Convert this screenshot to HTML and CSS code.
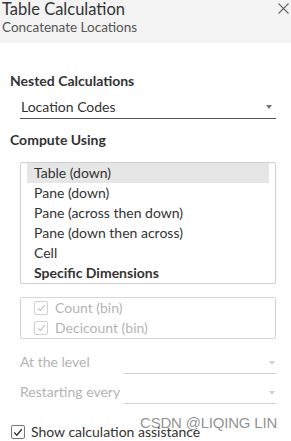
FILE: index.html
```html
<!DOCTYPE html>
<html>
<head>
<meta charset="utf-8">
<link rel="stylesheet" href="styles.css">
</head>
<body>
<div class="panel">
  <header class="head">
    <div class="titles">
      <div class="title">Table Calculation</div>
      <div class="sub">Concatenate Locations</div>
    </div>
    <svg class="close" width="11" height="11" viewBox="0 0 11 11"><path d="M0.5 0.5L10.5 10.5M10.5 0.5L0.5 10.5" stroke="#666" stroke-width="1.1" fill="none"/></svg>
  </header>
  <section class="content">
    <div class="label">Nested Calculations</div>
    <div class="select">
      <span>Location Codes</span>
      <span class="arrow"></span>
    </div>
    <div class="label label-compute">Compute Using</div>
    <ul class="list">
      <li class="item selected">Table (down)</li>
      <li class="item">Pane (down)</li>
      <li class="item">Pane (across then down)</li>
      <li class="item">Pane (down then across)</li>
      <li class="item">Cell</li>
      <li class="item strong">Specific Dimensions</li>
    </ul>
    <div class="dims">
      <div class="dim"><span class="cb cb-dis"><svg width="9" height="8" viewBox="0 0 9 8"><path d="M1 4.2L3.4 6.5L8 1" stroke="#c8c8c8" stroke-width="1.2" fill="none"/></svg></span>Count (bin)</div>
      <div class="dim"><span class="cb cb-dis"><svg width="9" height="8" viewBox="0 0 9 8"><path d="M1 4.2L3.4 6.5L8 1" stroke="#c8c8c8" stroke-width="1.2" fill="none"/></svg></span>Decicount (bin)</div>
    </div>
    <div class="lvl">
      <span class="lvl-label">At the level</span>
      <span class="field"><span class="arrow arrow-dis"></span></span>
    </div>
    <div class="lvl lvl-second">
      <span class="lvl-label">Restarting every</span>
      <span class="field"><span class="arrow arrow-dis"></span></span>
    </div>
    <div class="assist">
      <span class="cb cb-on"><svg width="10" height="9" viewBox="0 0 10 9"><path d="M1.2 4.6L3.8 7.2L8.8 1.2" stroke="#333" stroke-width="1.4" fill="none"/></svg></span>
      <span>Show calculation assistance</span>
    </div>
  </section>
  <div class="watermark">CSDN @LIQING LIN</div>
</div>
</body>
</html>
```
FILE: styles.css
```css
html, body {
  margin: 0;
  padding: 0;
  background: #fff;
}
body {
  font-family: Lato, "Open Sans", "Liberation Sans", sans-serif;
  color: #333;
  font-size: 14px;
}
.panel {
  position: relative;
  width: 291px;
  height: 441px;
  overflow: hidden;
}
.head {
  height: 43px;
  background: #f3f3f3;
  display: flex;
  justify-content: space-between;
  align-items: flex-start;
  padding-left: 2px;
  box-sizing: border-box;
}
.title {
  font-size: 16.5px;
  line-height: 18px;
  color: #333;
}
.sub {
  font-size: 13.5px;
  line-height: 16px;
  margin-top: 1px;
  color: #555;
}
.close {
  margin-top: 3px;
  margin-right: 2px;
}
.content {
  padding: 0;
}
.label {
  font-weight: bold;
  line-height: 20px;
  margin: 28px 0 0 10px;
  color: #333;
}
.label-compute {
  margin-top: 11px;
}
.select {
  margin: 6px 15px 0 20px;
  padding: 0 4px 1px 1px;
  line-height: 20px;
  border-bottom: 1px solid #555;
  display: flex;
  justify-content: space-between;
  align-items: center;
}
.arrow {
  width: 0;
  height: 0;
  border-left: 3.5px solid transparent;
  border-right: 3.5px solid transparent;
  border-top: 4px solid #777;
}
.arrow-dis {
  border-top-color: #d0d0d0;
}
.list {
  list-style: none;
  margin: 12px 15px 0 20px;
  padding: 0;
  border: 1px solid #cfcfcf;
  border-radius: 2px;
}
.item {
  margin: 0 6px;
  padding-left: 7px;
  line-height: 20px;
  height: 20px;
}
.selected {
  background: #e6e6e6;
}
.strong {
  font-weight: bold;
}
.dims {
  margin: 13px 15px 0 20px;
  border: 1px solid #d6d6d6;
  border-radius: 2px;
  color: #b4b4b4;
}
.dim {
  display: flex;
  align-items: center;
  height: 20px;
  line-height: 20px;
  padding-left: 13px;
}
.cb {
  box-sizing: border-box;
  display: inline-flex;
  align-items: center;
  justify-content: center;
  border-radius: 2px;
}
.cb-dis {
  width: 14px;
  height: 14px;
  border: 1px solid #d0d0d0;
  margin-right: 7px;
}
.lvl {
  display: flex;
  align-items: flex-end;
  margin: 13px 15px 0 20px;
  color: #b4b4b4;
}
.lvl-second {
  margin-top: 8px;
}
.lvl-label {
  width: 104px;
  line-height: 20px;
  padding-bottom: 2px;
}
.field {
  flex: 1;
  height: 21px;
  border-bottom: 1px solid #d4d4d4;
  display: flex;
  justify-content: flex-end;
  align-items: center;
  padding-right: 1px;
}
.assist {
  display: flex;
  align-items: center;
  margin: 18px 0 0 11px;
  line-height: 20px;
  color: #333;
}
.cb-on {
  width: 14px;
  height: 14px;
  border: 1px solid #777;
  margin-right: 6px;
}
.watermark {
  position: absolute;
  left: 140px;
  top: 412px;
  font-size: 15px;
  letter-spacing: -0.2px;
  line-height: 22px;
  color: rgba(110, 110, 110, 0.75);
  font-family: "Liberation Sans", Arial, sans-serif;
  white-space: nowrap;
}
```
